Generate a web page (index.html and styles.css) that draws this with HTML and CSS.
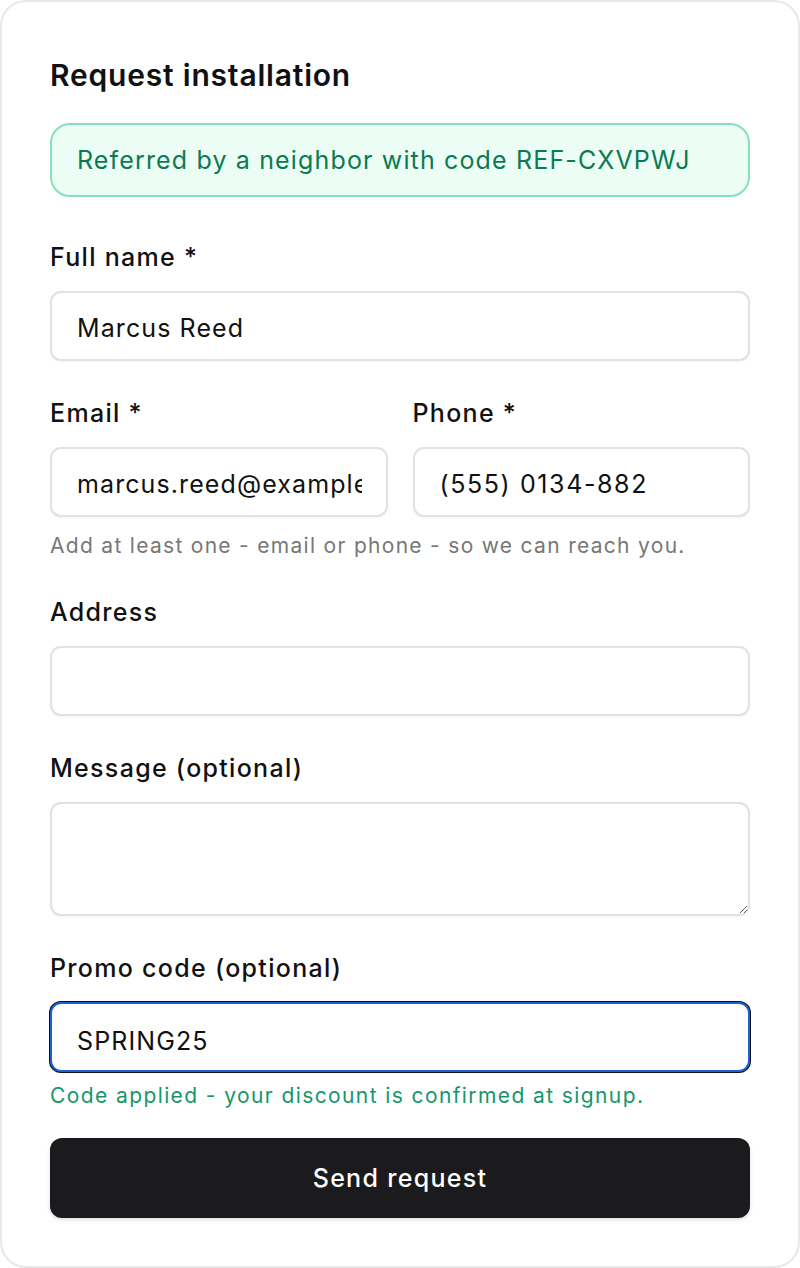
FILE: index.html
```html
<!DOCTYPE html>
<html>
<head>
    <title>Request installation</title>
    <link rel="stylesheet" href="styles.css">
</head>
<body>
    <div class="card">
        <h2 class="title">Request installation</h2>

        <!-- Referral banner -->
        <div class="referral">Referred by a neighbor with code REF-CXVPWJ</div>

        <form class="request-form">
            <div class="field">
                <label for="fullName">Full name *</label>
                <input type="text" id="fullName" class="input" value="Marcus Reed">
            </div>

            <div class="field-row">
                <div class="field">
                    <label for="email">Email *</label>
                    <input type="email" id="email" class="input" value="marcus.reed@example.com">
                </div>
                <div class="field">
                    <label for="phone">Phone *</label>
                    <input type="tel" id="phone" class="input phone" value="(555) 0134-882">
                </div>
            </div>
            <p class="hint">Add at least one - email or phone - so we can reach you.</p>

            <div class="field">
                <label for="address">Address</label>
                <input type="text" id="address" class="input">
            </div>

            <div class="field">
                <label for="message">Message (optional)</label>
                <textarea id="message" class="input textarea"></textarea>
            </div>

            <div class="field">
                <label for="promo">Promo code (optional)</label>
                <input type="text" id="promo" class="input is-focused" value="SPRING25">
            </div>
            <p class="hint success">Code applied - your discount is confirmed at signup.</p>

            <button type="button" class="submit-button">Send request</button>
        </form>
    </div>
</body>
</html>
```

FILE: styles.css
```css
html, body {
    margin: 0;
    padding: 0;
    background: #fff;
}

body {
    font-family: Inter, "Noto Sans", Arial, sans-serif;
    color: #111;
}

/* Card */
.card {
    box-sizing: border-box;
    min-height: 1268px;
    border: 2px solid #e8e8e8;
    border-radius: 26px;
    padding: 55px 48px 48px;
    background: #fff;
}

.title {
    margin: 0;
    font-size: 30px;
    line-height: 36px;
    font-weight: 600;
    letter-spacing: 0.8px;
}

/* Referral banner */
.referral {
    margin-top: 30px;
    padding: 20px 25px;
    font-size: 25px;
    line-height: 30px;
    letter-spacing: 1.15px;
    color: #0b7a52;
    background: #ecfdf5;
    border: 2px solid #86e0bd;
    border-radius: 20px;
}

/* Form */
.request-form {
    display: flex;
    flex-direction: column;
}

.field {
    display: flex;
    flex-direction: column;
    margin-top: 45px;
    min-width: 0;
}

.field label {
    font-size: 25px;
    line-height: 30px;
    font-weight: 500;
    letter-spacing: 1.3px;
    margin-bottom: 19px;
}

.field-row {
    display: grid;
    grid-template-columns: 1fr 1fr;
    column-gap: 25px;
}

.request-form > .field + .field,
.request-form > .hint + .field,
.field-row {
    margin-top: 37px;
}

.field-row .field {
    margin-top: 0;
}

.input {
    box-sizing: border-box;
    width: 100%;
    height: 70px;
    padding: 4px 24px 0 25px;
    font-family: inherit;
    font-size: 25px;
    letter-spacing: 1.1px;
    color: #111;
    background: #fff;
    border: 2px solid #e2e2e2;
    border-radius: 11px;
    box-shadow: 0 1px 2px rgba(0, 0, 0, 0.05);
    outline: none;
}

.input.phone {
    letter-spacing: 1.6px;
}

.textarea {
    height: 114px;
    padding-top: 16px;
    resize: vertical;
}

.is-focused {
    padding-top: 7px;
    border-color: #1f5fd6;
    box-shadow: 0 0 0 1px #111;
}

.hint {
    margin: 15px 0 0;
    font-size: 21px;
    line-height: 28px;
    letter-spacing: 1.3px;
    color: #777;
}

.hint.success {
    margin-top: 10px;
    letter-spacing: 1.4px;
    color: #15976a;
}

/* Button */
.submit-button {
    margin-top: 28px;
    height: 80px;
    border: none;
    border-radius: 12px;
    background: #1b1b1d;
    color: #fff;
    font-family: inherit;
    font-size: 25px;
    font-weight: 500;
    letter-spacing: 1.3px;
    cursor: pointer;
    box-shadow: 0 2px 4px rgba(0, 0, 0, 0.12);
}
```
